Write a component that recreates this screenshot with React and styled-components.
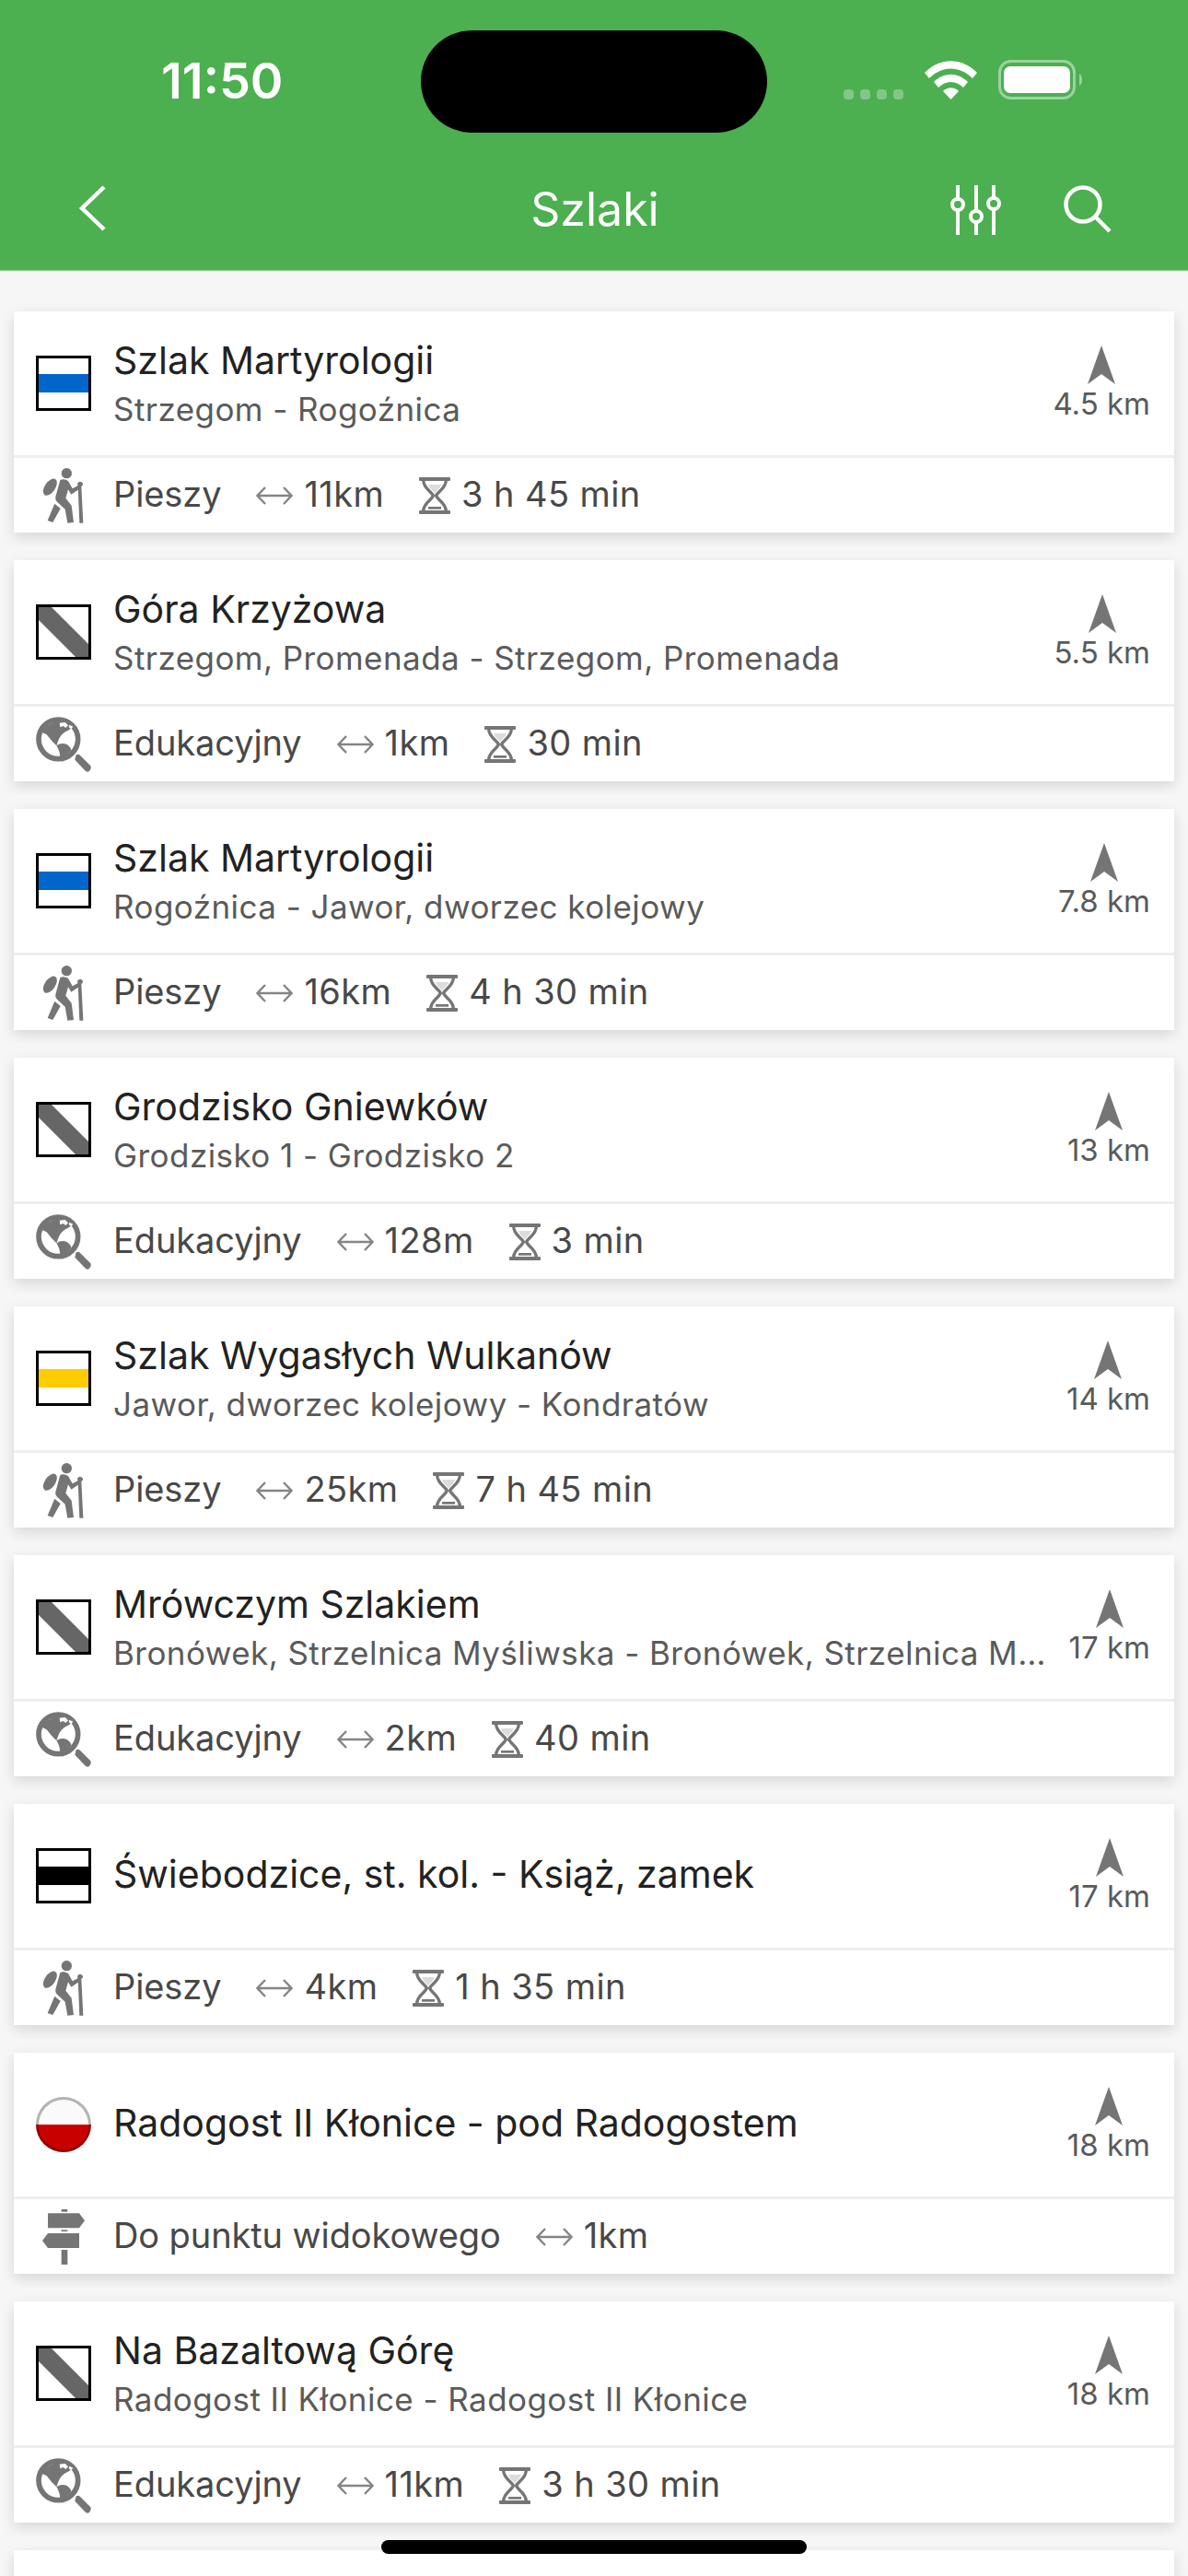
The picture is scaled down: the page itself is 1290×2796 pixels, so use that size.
import React from "react";
import styled, { createGlobalStyle } from "styled-components";

const GlobalStyle = createGlobalStyle`
  html, body {
    margin: 0;
    padding: 0;
    background: #f6f6f6;
  }
  * {
    box-sizing: border-box;
  }
`;

const Screen = styled.div`
  position: relative;
  width: 1290px;
  height: 2796px;
  overflow: hidden;
  background: #f6f6f6;
  font-family: Inter, "Liberation Sans", sans-serif;
`;

const Header = styled.header`
  height: 294px;
  background: #4caf50;
  border-bottom: 1px solid #8ccb8f;
  color: #fff;
`;

const StatusBar = styled.div`
  position: relative;
  height: 176px;
  display: flex;
  align-items: flex-start;
  justify-content: space-between;
  padding: 60px 112px 0 175px;
`;

const Clock = styled.span`
  font-size: 54px;
  line-height: 56px;
  font-weight: 600;
`;

const Island = styled.div`
  position: absolute;
  left: 457px;
  top: 33px;
  width: 376px;
  height: 111px;
  border-radius: 56px;
  background: #000;
`;

const StatusIcons = styled.div`
  display: flex;
  align-items: flex-end;
  gap: 23px;
  padding-top: 5px;
`;

const NavBar = styled.nav`
  height: 117px;
  display: flex;
  align-items: flex-start;
  padding: 25px 83px 0 85px;
`;

const NavTitle = styled.h1`
  flex: 1;
  margin: -4px 0 0;
  padding: 0 0 0 145px;
  text-align: center;
  font-size: 50px;
  line-height: 60px;
  font-weight: 400;
`;

const NavActions = styled.div`
  display: flex;
  align-items: flex-start;
  gap: 68px;
`;

const List = styled.main`
  padding-top: 29px;
`;

const Cell = styled.div`
  height: 270px;
  padding: 15px;
  overflow: hidden;
`;

const Card = styled.article`
  height: 240px;
  background: #fff;
  box-shadow: 0 5px 14px rgba(0, 0, 0, 0.13);
`;

const TopRow = styled.div`
  height: 156px;
  display: flex;
  align-items: center;
  padding: 0 26px 0 24px;
`;

const Divider = styled.div`
  height: 3px;
  background: #eeeeee;
`;

const BottomRow = styled.div`
  height: 81px;
  display: flex;
  align-items: center;
  padding-left: 24px;
`;

const Flag = styled.div`
  flex: none;
  width: 60px;
  height: 60px;
  margin-right: 24px;
`;

const Names = styled.div`
  flex: 1;
  min-width: 0;
  margin-right: 24px;
  padding: ${(props) => (props.$withSub ? "2px 0 0" : "0 0 5px")};
`;

const Title = styled.div`
  font-size: 41px;
  line-height: 50px;
  color: #222;
  white-space: nowrap;
`;

const Subtitle = styled.div`
  margin-top: 3px;
  font-size: 35px;
  line-height: 50px;
  letter-spacing: 0.44px;
  color: #5a5a5a;
  white-space: nowrap;
  overflow: hidden;
  text-overflow: ellipsis;
`;

const Distance = styled.div`
  flex: none;
  display: flex;
  flex-direction: column;
  align-items: center;
`;

const DistanceText = styled.span`
  margin-top: 2px;
  font-size: 33px;
  line-height: 38px;
  color: #5a5a5a;
`;

const TypeIcon = styled.div`
  flex: none;
  width: 60px;
  height: 60px;
  margin-right: 24px;
`;

const Meta = styled.span`
  margin-bottom: 3px;
  margin-right: ${(props) => props.$gap || 0}px;
  font-size: 38px;
  line-height: 46px;
  letter-spacing: 0.4px;
  color: #484848;
  white-space: nowrap;
`;

const Kind = styled(Meta)`
  letter-spacing: -0.1px;
`;

const MetaIcon = styled.svg`
  flex: none;
  margin-right: 12px;
`;

const HomeIndicator = styled.div`
  position: absolute;
  left: 414px;
  bottom: 24px;
  width: 462px;
  height: 15px;
  border-radius: 8px;
  background: #000;
`;

const GRAY = "#757575";

const Signal = () => (
  <svg width="65" height="11" viewBox="0 0 65 11" fill="#fff" opacity="0.3">
    <rect x="0" width="11" height="11" rx="4" />
    <rect x="18" width="11" height="11" rx="4" />
    <rect x="36" width="11" height="11" rx="4" />
    <rect x="54" width="11" height="11" rx="4" />
  </svg>
);

const Wifi = () => (
  <svg width="57" height="42" viewBox="0 0 57 42" fill="#fff">
    <path d="M0 13 C16 -4 41 -4 57 13 L52 19 C38 5 19 5 5 19 Z" />
    <path d="M10 23 C21 12 36 12 47 23 L42 29 C34 21 23 21 15 29 Z" />
    <path d="M20 33 C25 28 32 28 37 33 L28.5 42 Z" />
  </svg>
);

const Battery = () => (
  <svg width="94" height="43" viewBox="0 0 94 43">
    <rect x="1.5" y="1.5" width="81" height="40" rx="12" fill="none" stroke="#fff" strokeOpacity="0.45" strokeWidth="3" />
    <rect x="6" y="7" width="72" height="29" rx="7" fill="#fff" />
    <path d="M88 15 C92 17 92 26 88 28 Z" fill="#fff" fillOpacity="0.45" />
  </svg>
);

const Back = () => (
  <svg width="30" height="50" viewBox="0 0 30 50" fill="none" stroke="#fff" strokeWidth="4.5">
    <path d="M28 2 L4 25 L28 48" />
  </svg>
);

const Sliders = () => (
  <svg width="55" height="54" viewBox="0 0 55 54" fill="none" stroke="#fff" strokeWidth="4">
    <path d="M8 0 V15 M8 27 V54 M28 0 V28 M28 40 V54 M47 0 V14 M47 26 V54" />
    <circle cx="8" cy="21" r="6" />
    <circle cx="28" cy="34" r="6" />
    <circle cx="47" cy="20" r="6" />
  </svg>
);

const Search = () => (
  <svg width="52" height="52" viewBox="0 0 52 52" fill="none" stroke="#fff" strokeWidth="4.5">
    <circle cx="21" cy="21" r="18.5" />
    <path d="M34 34 L50 50" />
  </svg>
);

const NavArrow = () => (
  <svg width="30" height="42" viewBox="0 0 30 42" fill={GRAY}>
    <path d="M15 0 L30 42 L15 31 L0 42 Z" />
  </svg>
);

const LengthIcon = () => (
  <MetaIcon width="40" height="24" viewBox="0 0 40 24" fill="none" stroke="#858585" strokeWidth="2.4">
    <path d="M1 12 H39 M10 3 L1.5 12 L10 21 M30 3 L38.5 12 L30 21" />
  </MetaIcon>
);

const TimeIcon = () => (
  <MetaIcon width="34" height="40" viewBox="1368 588 102 120">
    <rect x="1368" y="588" width="102" height="12" rx="3" fill={GRAY} />
    <rect x="1368" y="696" width="102" height="12" rx="3" fill={GRAY} />
    <path d="M1382 598 C1382 625 1410 635 1414 648 C1410 662 1382 672 1382 698 M1456 598 C1456 625 1428 635 1424 648 C1428 662 1456 672 1456 698" fill="none" stroke={GRAY} strokeWidth="10" />
    <path d="M1398 612 H1440 C1436 625 1425 632 1419 640 C1413 632 1402 625 1398 612 Z" fill={GRAY} fillOpacity="0.25" />
    <rect x="1398" y="684" width="42" height="8" fill={GRAY} />
  </MetaIcon>
);

const Hiker = () => (
  <svg width="60" height="60" viewBox="117 558 180 180" fill={GRAY}>
    <circle cx="217" cy="575" r="17" />
    <ellipse cx="163" cy="620" rx="17" ry="31" transform="rotate(35 163 620)" />
    <path d="M196 597 Q210 592 222 600 L236 625 L256 614 L262 624 L232 644 L222 628 L214 656 L233 680 L240 735 L220 737 L212 692 L186 668 Q178 660 182 648 Z" />
    <path d="M178 674 L197 690 L172 735 L155 729 Z" />
    <path d="M252 608 Q261 596 270 608 L270 613 L265 618 L271 737 L259 737 L254 618 Z" />
  </svg>
);

const Globe = () => (
  <svg width="60" height="60" viewBox="117 528 180 180" fill={GRAY}>
    <circle cx="190" cy="601" r="64" fill="none" stroke={GRAY} strokeWidth="17" />
    <path d="M248 652 Q256 648 262 655 L295 688 Q299 698 290 706 Q282 709 276 702 L244 668 Z" />
    <path d="M136 578 Q150 552 190 540 L240 560 L222 572 Q200 582 192 600 L184 622 Q168 608 152 586 Z" />
    <path d="M184 622 Q200 610 218 618 Q232 628 232 638 Q212 654 204 674 L196 664 Q196 640 184 622 Z" />
    <path d="M194 548 L212 546 L222 556 L214 564 L206 558 L196 562 Z" fill="#fff" />
    <path d="M226 554 L238 560 L232 568 L224 562 Z" fill="#fff" />
  </svg>
);

const Signpost = () => (
  <svg width="60" height="60" viewBox="117 528 180 180" fill={GRAY}>
    <rect x="200" y="528" width="20" height="8" />
    <path d="M156 541 H258 L276 565 L258 589 H156 Z" />
    <rect x="200" y="595" width="20" height="5" />
    <path d="M258 606 V654 H156 L138 630 L156 606 Z" />
    <rect x="200" y="660" width="20" height="48" />
  </svg>
);

const StripeFlag = ({ color }) => (
  <svg width="60" height="60" viewBox="0 0 60 60">
    <rect width="60" height="60" fill="#fff" />
    <rect y="20" width="60" height="20" fill={color} />
    <rect x="1.5" y="1.5" width="57" height="57" fill="none" stroke="#000" strokeWidth="3" />
  </svg>
);

const SlashFlag = () => (
  <svg width="60" height="60" viewBox="0 0 60 60">
    <rect width="60" height="60" fill="#fff" />
    <path d="M3 3 H17 L57 43 V57 H43 L3 17 Z" fill="#666" />
    <rect x="1.5" y="1.5" width="57" height="57" fill="none" stroke="#000" strokeWidth="3" />
  </svg>
);

const RoundFlag = () => (
  <svg width="60" height="60" viewBox="0 0 60 60">
    <path d="M0 30 A30 30 0 0 1 60 30 Z" fill="#b4b4b4" />
    <path d="M3 30 A27 27 0 0 1 57 30 Z" fill="#fafafa" />
    <path d="M0 30 A30 30 0 0 0 60 30 Z" fill="#8e0000" />
    <path d="M2 30 A28 27 0 0 0 58 30 Z" fill="#c80000" />
  </svg>
);

const flags = {
  blue: <StripeFlag color="#0066cc" />,
  yellow: <StripeFlag color="#ffcc00" />,
  black: <StripeFlag color="#000" />,
  slash: <SlashFlag />,
  round: <RoundFlag />,
};

const kinds = {
  walk: { icon: <Hiker />, label: "Pieszy" },
  edu: { icon: <Globe />, label: "Edukacyjny" },
  view: { icon: <Signpost />, label: "Do punktu widokowego" },
};

const trails = [
  { flag: "blue", title: "Szlak Martyrologii", sub: "Strzegom - Rogoźnica", dist: "4.5 km", kind: "walk", len: "11km", time: "3 h 45 min" },
  { flag: "slash", title: "Góra Krzyżowa", sub: "Strzegom, Promenada - Strzegom, Promenada", dist: "5.5 km", kind: "edu", len: "1km", time: "30 min" },
  { flag: "blue", title: "Szlak Martyrologii", sub: "Rogoźnica - Jawor, dworzec kolejowy", dist: "7.8 km", kind: "walk", len: "16km", time: "4 h 30 min" },
  { flag: "slash", title: "Grodzisko Gniewków", sub: "Grodzisko 1 - Grodzisko 2", dist: "13 km", kind: "edu", len: "128m", time: "3 min" },
  { flag: "yellow", title: "Szlak Wygasłych Wulkanów", sub: "Jawor, dworzec kolejowy - Kondratów", dist: "14 km", kind: "walk", len: "25km", time: "7 h 45 min" },
  { flag: "slash", title: "Mrówczym Szlakiem", sub: "Bronówek, Strzelnica Myśliwska - Bronówek, Strzelnica Myśliwska", dist: "17 km", kind: "edu", len: "2km", time: "40 min" },
  { flag: "black", title: "Świebodzice, st. kol. - Książ, zamek", dist: "17 km", kind: "walk", len: "4km", time: "1 h 35 min" },
  { flag: "round", title: "Radogost II Kłonice - pod Radogostem", dist: "18 km", kind: "view", len: "1km" },
  { flag: "slash", title: "Na Bazaltową Górę", sub: "Radogost II Kłonice - Radogost II Kłonice", dist: "18 km", kind: "edu", len: "11km", time: "3 h 30 min" },
];

const TrailCard = ({ trail }) => (
  <Cell>
    <Card>
      <TopRow>
        <Flag>{flags[trail.flag]}</Flag>
        <Names $withSub={!!trail.sub}>
          <Title>{trail.title}</Title>
          {trail.sub && <Subtitle>{trail.sub}</Subtitle>}
        </Names>
        <Distance>
          <NavArrow />
          <DistanceText>{trail.dist}</DistanceText>
        </Distance>
      </TopRow>
      <Divider />
      <BottomRow>
        <TypeIcon>{kinds[trail.kind].icon}</TypeIcon>
        <Kind $gap={38}>{kinds[trail.kind].label}</Kind>
        <LengthIcon />
        <Meta $gap={38}>{trail.len}</Meta>
        {trail.time && <TimeIcon />}
        {trail.time && <Meta>{trail.time}</Meta>}
      </BottomRow>
    </Card>
  </Cell>
);

const App = () => (
  <Screen>
    <GlobalStyle />
    <Header>
      <StatusBar>
        <Clock>11:50</Clock>
        <Island />
        <StatusIcons>
          <Signal />
          <Wifi />
          <Battery />
        </StatusIcons>
      </StatusBar>
      <NavBar>
        <Back />
        <NavTitle>Szlaki</NavTitle>
        <NavActions>
          <Sliders />
          <Search />
        </NavActions>
      </NavBar>
    </Header>
    <List>
      {trails.map((trail, i) => (
        <TrailCard key={i} trail={trail} />
      ))}
      <Cell>
        <Card />
      </Cell>
    </List>
    <HomeIndicator />
  </Screen>
);

export default App;
